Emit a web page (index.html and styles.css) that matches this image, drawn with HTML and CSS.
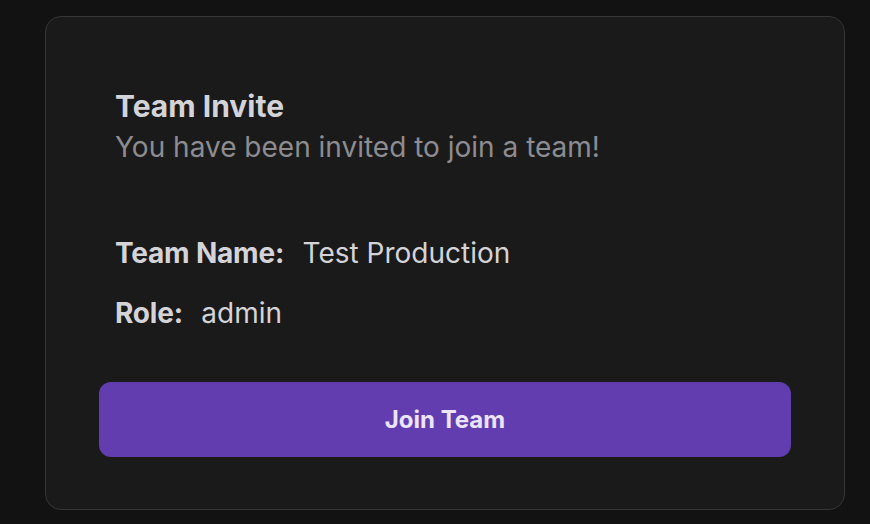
FILE: index.html
```html
<!DOCTYPE html>
<html>
<head>
<meta charset="utf-8">
<link rel="stylesheet" href="styles.css">
</head>
<body>
<div class="page">
  <div class="card">
    <div class="header">
      <h1 class="title">Team Invite</h1>
      <p class="subtitle">You have been invited to join a team!</p>
    </div>
    <div class="details">
      <div class="row"><span class="label">Team Name:</span><span class="value">Test Production</span></div>
      <div class="row"><span class="label">Role:</span><span class="value">admin</span></div>
    </div>
    <button class="join">Join Team</button>
  </div>
</div>
</body>
</html>
```
FILE: styles.css
```css
html, body {
  margin: 0;
  background: #121212;
  font-family: Inter, "Noto Sans", sans-serif;
}
.page {
  padding: 16px 25px 14px 45px;
}
.card {
  width: 800px;
  height: 494px;
  box-sizing: border-box;
  background: #1a1a1a;
  border: 1.5px solid #363638;
  border-radius: 16px;
  padding: 70.5px 53px 0 53px;
}
.header {
  padding-left: 16px;
}
.title {
  margin: 0;
  font-size: 30px;
  font-weight: 700;
  line-height: 36px;
  color: #d4d4d8;
}
.subtitle {
  margin: 5px 0 0;
  font-size: 28px;
  line-height: 36px;
  color: #8c8c91;
}
.details {
  padding-left: 16px;
  margin-top: 70px;
  display: flex;
  flex-direction: column;
  gap: 24px;
}
.row {
  display: flex;
  gap: 18.5px;
  font-size: 28px;
  line-height: 36px;
}
.label {
  font-weight: 700;
  color: #d4d4d8;
  letter-spacing: -0.2px;
}
.value {
  color: #d4d4d8;
}
.join {
  display: block;
  width: 692px;
  height: 75px;
  margin-top: 51px;
  padding: 0;
  border: none;
  border-radius: 12px;
  background: #623db0;
  color: #ece4fb;
  font-family: Inter, sans-serif;
  font-size: 24px;
  font-weight: 700;
}
```
